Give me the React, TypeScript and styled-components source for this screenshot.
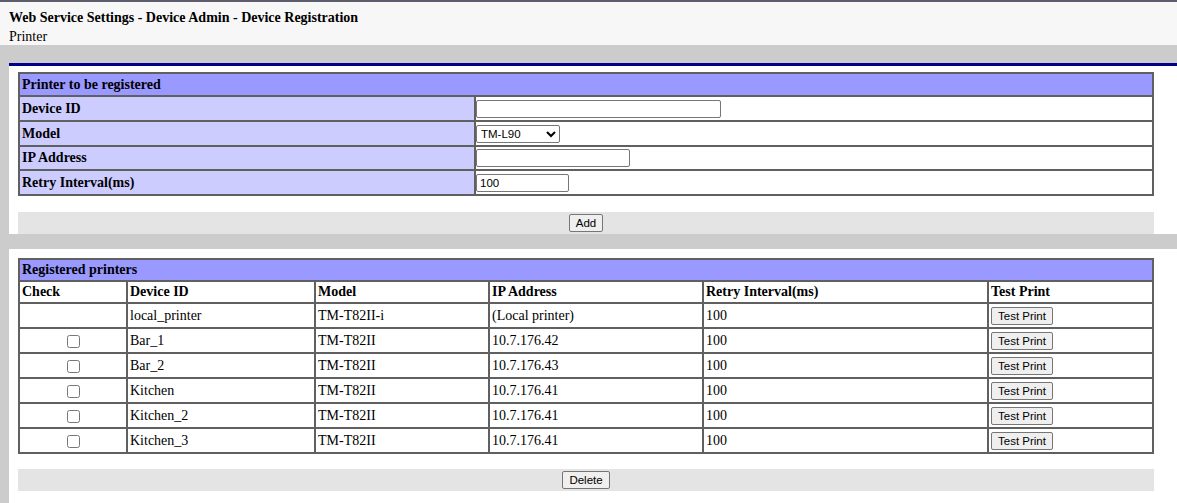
import React from "react";
import styled, { createGlobalStyle } from "styled-components";

const GlobalStyle = createGlobalStyle`
  html, body {
    margin: 0;
    padding: 0;
    background-color: #cccccc;
    font-family: "Liberation Serif", "Times New Roman", serif;
    font-size: 14px;
    color: #000;
  }
`;

const Page = styled.div`
  width: 1177px;
  min-height: 503px;
  overflow: hidden;
  background-color: #cccccc;
`;

const Header = styled.div`
  background-color: #f7f7f7;
  border-top: 2px solid #5c5c6c;
  padding: 6px 9px 0;
  height: 37px;
  line-height: 19px;
`;

const Title = styled.div`
  font-weight: bold;
`;

const Content = styled.div`
  padding: 18px 0 0 9px;
  display: flex;
  flex-direction: column;
  gap: 15px;
`;

const Panel = styled.section<{ $accent?: boolean }>`
  background-color: #ffffff;
  border-top: ${(p) => (p.$accent ? "3px solid #000088" : "none")};
  padding: ${(p) => (p.$accent ? "6px" : "9px")} 0 0 9px;
  display: flex;
  flex-direction: column;
  gap: ${(p) => (p.$accent ? "16px" : "15px")};
  min-height: ${(p) => (p.$accent ? "0" : "246px")};
`;

const Table = styled.table`
  width: 1136px;
  border-collapse: collapse;
  border: 2px solid #606060;
  table-layout: fixed;

  td, th {
    border: 2px solid #606060;
    padding: 2px 2px;
    text-align: left;
    vertical-align: middle;
  }
`;

const Caption = styled.th`
  background-color: #9999ff;
  font-weight: bold;
  height: 16px;
  line-height: 16px;
`;

const FirstCaption = styled(Caption)`
  height: 17px;
`;

const Label = styled.th`
  background-color: #ccccff;
  font-weight: bold;
  height: 17px;
  line-height: 17px;
`;

const ValueCell = styled.td`
  height: 17px;
  line-height: 17px;
  padding: 2px 0 !important;
`;

const HeadCell = styled.th`
  font-weight: bold;
  height: 16px;
  line-height: 16px;
`;

const Cell = styled.td<{ $center?: boolean }>`
  height: 19px;
  line-height: 17px;
  text-align: ${(p) => (p.$center ? "center" : "left")} !important;
`;

const TextInput = styled.input<{ $w: number }>`
  box-sizing: border-box;
  width: ${(p) => p.$w}px;
  height: 18px;
  margin: 0;
  padding: 0 3px;
  border: 1px solid #767676;
  border-radius: 2px;
  font-family: "Liberation Sans", Arial, sans-serif;
  font-size: 11.5px;
  vertical-align: middle;
`;

const Select = styled.select`
  box-sizing: border-box;
  width: 84px;
  height: 18px;
  margin: 0;
  border: 1px solid #767676;
  border-radius: 2px;
  font-family: "Liberation Sans", Arial, sans-serif;
  font-size: 11.5px;
  vertical-align: middle;
  background: #fff;
`;

const Button = styled.button`
  box-sizing: border-box;
  height: 18px;
  margin: 0;
  padding: 0 6px;
  border: 1px solid #767676;
  border-radius: 2px;
  background-color: #efefef;
  font-family: "Liberation Sans", Arial, sans-serif;
  font-size: 11.5px;
  line-height: 16px;
  color: #000;
  vertical-align: middle;
`;

const RowButton = styled(Button)`
  display: block;
`;

const Check = styled.input`
  width: 13px;
  height: 13px;
  margin: 0;
  vertical-align: middle;
`;

const ActionBar = styled.div`
  width: 1136px;
  height: 22px;
  background-color: #e4e4e4;
  display: flex;
  align-items: center;
  justify-content: center;
`;

type Printer = {
  id: string;
  model: string;
  ip: string;
  retry: number;
  local?: boolean;
};

const printers: Printer[] = [
  { id: "local_printer", model: "TM-T82II-i", ip: "(Local printer)", retry: 100, local: true },
  { id: "Bar_1", model: "TM-T82II", ip: "10.7.176.42", retry: 100 },
  { id: "Bar_2", model: "TM-T82II", ip: "10.7.176.43", retry: 100 },
  { id: "Kitchen", model: "TM-T82II", ip: "10.7.176.41", retry: 100 },
  { id: "Kitchen_2", model: "TM-T82II", ip: "10.7.176.41", retry: 100 },
  { id: "Kitchen_3", model: "TM-T82II", ip: "10.7.176.41", retry: 100 },
];

const App = () => {
  return (
    <Page>
      <GlobalStyle />
      <Header>
        <Title>Web Service Settings - Device Admin - Device Registration</Title>
        <div>Printer</div>
      </Header>
      <Content>
        <Panel $accent>
          <Table>
            <colgroup>
              <col style={{ width: 456 }} />
              <col />
            </colgroup>
            <tbody>
              <tr>
                <FirstCaption colSpan={2}>Printer to be registered</FirstCaption>
              </tr>
              <tr>
                <Label>Device ID</Label>
                <ValueCell>
                  <TextInput $w={245} type="text" />
                </ValueCell>
              </tr>
              <tr>
                <Label>Model</Label>
                <ValueCell>
                  <Select defaultValue="TM-L90">
                    <option>TM-L90</option>
                    <option>TM-T82II</option>
                    <option>TM-T82II-i</option>
                  </Select>
                </ValueCell>
              </tr>
              <tr>
                <Label>IP Address</Label>
                <ValueCell>
                  <TextInput $w={154} type="text" />
                </ValueCell>
              </tr>
              <tr>
                <Label>Retry Interval(ms)</Label>
                <ValueCell>
                  <TextInput $w={93} type="text" defaultValue="100" />
                </ValueCell>
              </tr>
            </tbody>
          </Table>
          <ActionBar>
            <Button>Add</Button>
          </ActionBar>
        </Panel>
        <Panel>
          <Table>
            <colgroup>
              <col style={{ width: 108 }} />
              <col style={{ width: 188 }} />
              <col style={{ width: 174 }} />
              <col style={{ width: 214 }} />
              <col style={{ width: 285 }} />
              <col />
            </colgroup>
            <tbody>
              <tr>
                <Caption colSpan={6}>Registered printers</Caption>
              </tr>
              <tr>
                <HeadCell>Check</HeadCell>
                <HeadCell>Device ID</HeadCell>
                <HeadCell>Model</HeadCell>
                <HeadCell>IP Address</HeadCell>
                <HeadCell>Retry Interval(ms)</HeadCell>
                <HeadCell>Test Print</HeadCell>
              </tr>
              {printers.map((p) => (
                <tr key={p.id}>
                  <Cell $center>{p.local ? null : <Check type="checkbox" />}</Cell>
                  <Cell>{p.id}</Cell>
                  <Cell>{p.model}</Cell>
                  <Cell>{p.ip}</Cell>
                  <Cell>{p.retry}</Cell>
                  <Cell>
                    <RowButton>Test Print</RowButton>
                  </Cell>
                </tr>
              ))}
            </tbody>
          </Table>
          <ActionBar>
            <Button>Delete</Button>
          </ActionBar>
        </Panel>
      </Content>
    </Page>
  );
};

export default App;
